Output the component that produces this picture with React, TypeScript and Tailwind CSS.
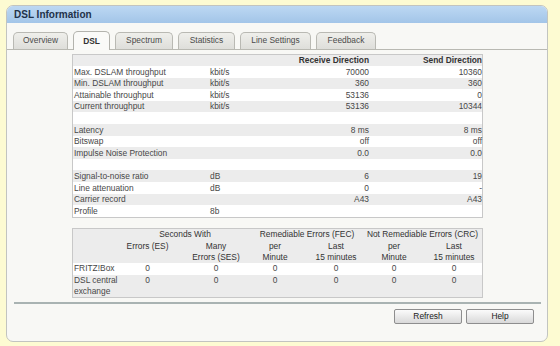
import React from "react";

const font = { fontFamily: '"Liberation Sans", Arial, sans-serif' };

const tabs = [
  { label: "Overview", w: "w-[55px]" },
  { label: "DSL", w: "w-[37px]", active: true },
  { label: "Spectrum", w: "w-[58px]" },
  { label: "Statistics", w: "w-[57px]" },
  { label: "Line Settings", w: "w-[71px]" },
  { label: "Feedback", w: "w-[60px]" },
];

const rows: string[][] = [
  ["", "", "Receive Direction", "Send Direction"],
  ["Max. DSLAM throughput", "kbit/s", "70000", "10360"],
  ["Min. DSLAM throughput", "kbit/s", "360", "360"],
  ["Attainable throughput", "kbit/s", "53136", "0"],
  ["Current throughput", "kbit/s", "53136", "10344"],
  ["", "", "", ""],
  ["Latency", "", "8 ms", "8 ms"],
  ["Bitswap", "", "off", "off"],
  ["Impulse Noise Protection", "", "0.0", "0.0"],
  ["", "", "", ""],
  ["Signal-to-noise ratio", "dB", "6", "19"],
  ["Line attenuation", "dB", "0", "-"],
  ["Carrier record", "", "A43", "A43"],
  ["Profile", "8b", "", ""],
];

const errorRows = [
  { label: ["FRITZ!Box"], values: ["0", "0", "0", "0", "0", "0"] },
  { label: ["DSL central", "exchange"], values: ["0", "0", "0", "0", "0", "0"] },
];

const errCols = "grid grid-cols-[40px_69px_68px_50px_72px_44px_1fr]";

function Tab({ label, w, active }: { label: string; w: string; active?: boolean }) {
  return active ? (
    <div
      className={`${w} h-[18.5px] -mb-px rounded-t-[5px] border border-b-0 border-[#b3b3ad] bg-[#fafaf8] flex items-center justify-center font-bold text-[#333]`}
    >
      {label}
    </div>
  ) : (
    <div
      className={`${w} h-[17px] rounded-t-[5px] border border-b-0 border-[#b9b9b3] bg-gradient-to-b from-[#efefeb] to-[#dededa] flex items-center justify-center text-[#4a4a4a]`}
    >
      {label}
    </div>
  );
}

export default function App() {
  return (
    <div className="w-[560px] h-[346px] bg-[#fdfbd2] pt-[5px] pl-[6px]" style={font}>
      <div className="w-[542px] h-[337px] rounded-[7px] border border-[#c2c4c0] bg-[#f8f8f5] overflow-hidden flex flex-col text-[8.4px] leading-none">
        {/* Title bar */}
        <div className="h-[17px] shrink-0 bg-gradient-to-b from-[#bcd8f3] to-[#a3c5e8] pl-[7px] flex items-center text-[10px] font-bold text-[#22324a]">
          DSL Information
        </div>

        {/* Tabs */}
        <div className="mt-[8.5px] h-[18px] shrink-0 flex items-end gap-[5px] pl-[6px] border-b border-[#b9b9b2]">
          {tabs.map((t) => (
            <Tab key={t.label} {...t} />
          ))}
        </div>

        {/* Line values */}
        <div className="ml-[65px] mt-[4px] w-[411px] border border-[#c8c8c8] bg-white">
          {rows.map((r, i) => (
            <div
              key={i}
              className={`grid grid-cols-[137px_60px_99px_1fr] h-[11.6px] items-center ${
                i % 2 === 0 ? "bg-[#ececec]" : "bg-white"
              } ${i === 0 ? "font-bold text-[#333]" : "text-[#474747]"}`}
            >
              <span className="pl-[1px] whitespace-nowrap">{r[0]}</span>
              <span className="whitespace-nowrap">{r[1]}</span>
              <span className="text-right whitespace-nowrap">{r[2]}</span>
              <span className="text-right whitespace-nowrap">{r[3]}</span>
            </div>
          ))}
        </div>

        {/* Error counters */}
        <div className="ml-[65px] mt-[10.5px] w-[411px] border border-[#c8c8c8] bg-white leading-[11.3px]">
          <div className="bg-[#ececec] text-[#333]">
            <div className="grid grid-cols-[40px_144px_100px_1fr] text-center whitespace-nowrap">
              <span />
              <span>Seconds With</span>
              <span>Remediable Errors (FEC)</span>
              <span className="pl-[6px]">Not Remediable Errors (CRC)</span>
            </div>
            <div className={`${errCols} text-center`}>
              <span />
              <span className="self-start">Errors (ES)</span>
              <span>
                Many
                <br />
                Errors (SES)
              </span>
              <span>
                per
                <br />
                Minute
              </span>
              <span>
                Last
                <br />
                15 minutes
              </span>
              <span>
                per
                <br />
                Minute
              </span>
              <span className="pl-[10px]">
                Last
                <br />
                15 minutes
              </span>
            </div>
          </div>
          {errorRows.map((row, i) => (
            <div
              key={i}
              className={`${errCols} text-[#474747] ${i % 2 === 0 ? "bg-white" : "bg-[#ececec]"}`}
            >
              <span className="pl-[1px] whitespace-nowrap">
                {row.label.map((l, j) => (
                  <React.Fragment key={j}>
                    {j > 0 && <br />}
                    {l}
                  </React.Fragment>
                ))}
              </span>
              {row.values.map((v, j) => (
                <span key={j} className={`text-center ${j === 5 ? "pl-[10px]" : ""}`}>
                  {v}
                </span>
              ))}
            </div>
          ))}
        </div>

        <div className="mt-[3.5px] ml-[7px] mr-[6px] h-[2px] bg-[#a9b3b2]" />

        {/* Buttons */}
        <div className="mt-[5px] pr-[13px] flex justify-end gap-[4px]">
          {["Refresh", "Help"].map((b) => (
            <button
              key={b}
              type="button"
              className="w-[68px] h-[15px] rounded-[2px] border border-[#8e8e8e] bg-gradient-to-b from-[#fbfbfb] to-[#d9d9d9] text-[#222] text-[8.4px] leading-none"
            >
              {b}
            </button>
          ))}
        </div>
      </div>
    </div>
  );
}
